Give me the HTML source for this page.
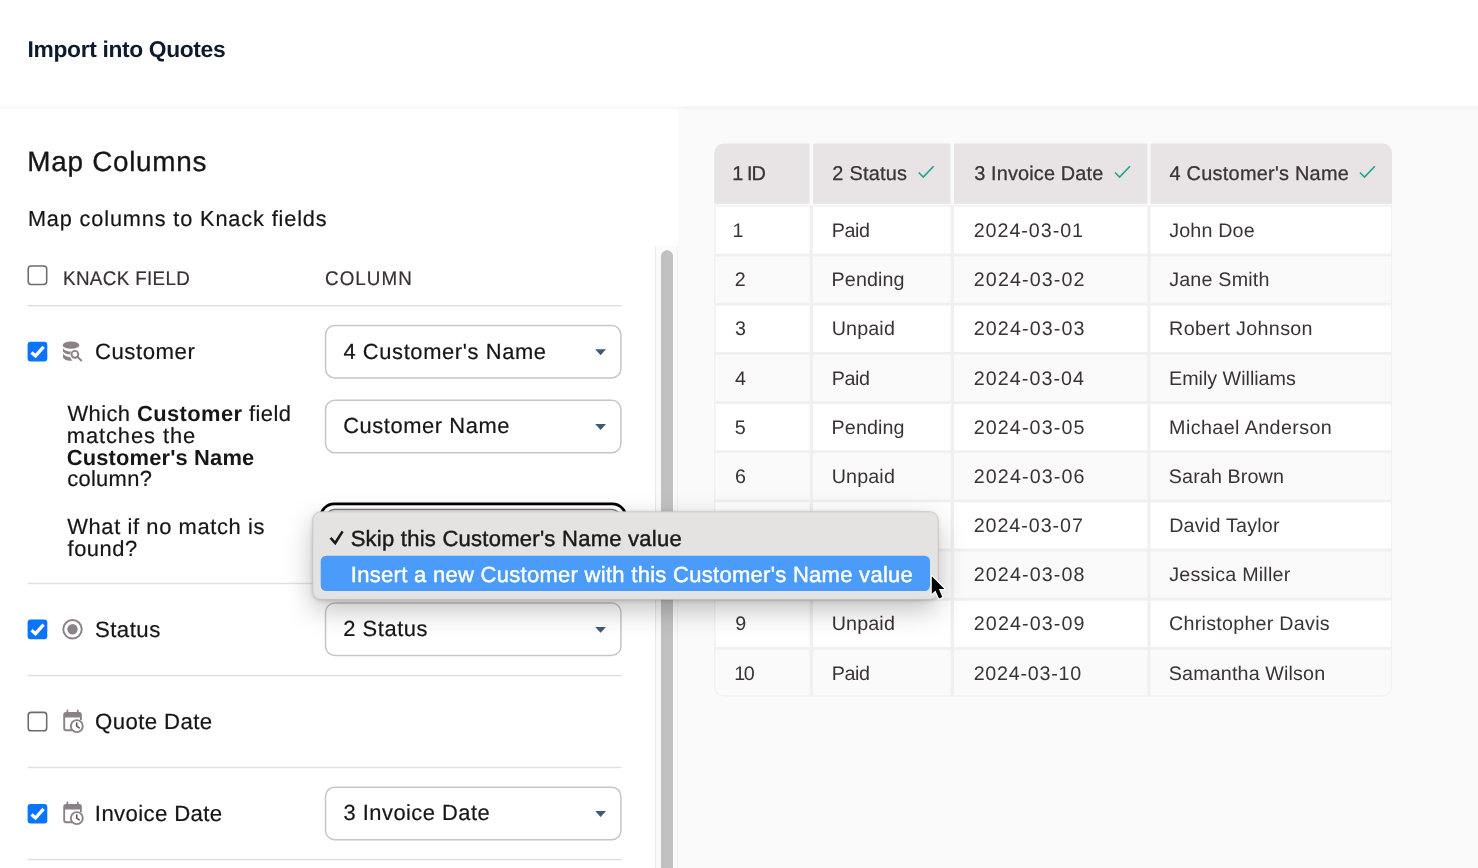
<!DOCTYPE html>
<html lang="en">
<head>
<meta charset="utf-8">
<title>Import into Quotes</title>
<style>
*{box-sizing:border-box;margin:0;padding:0}
html,body{width:1478px;height:868px;overflow:hidden;background:#fff}
body{font-family:"Liberation Sans",sans-serif;color:#1a1a1a}
.page{position:absolute;left:0;top:0;width:1478px;height:868px;overflow:hidden;will-change:transform;background:#fff}
.t{position:absolute;white-space:nowrap;line-height:1;font-weight:400;font-style:normal;text-rendering:geometricPrecision;-webkit-text-stroke:0.2px}
h1.t,b.t,.t b{font-weight:700;-webkit-text-stroke:0}
.g{position:absolute;display:block;overflow:hidden}
.bg{position:absolute}
table,thead,tbody,tr,th,td{display:block}
</style>
</head>
<body>
<div class="page">
<svg class="g bgsvg" style="left:0px;top:0px" width="1478" height="868" viewBox="0 0 1478 868"><rect x="0" y="0" width="1478" height="868" fill="#fff"/><rect x="677.8" y="106" width="800.2" height="762" fill="#fafafa"/><rect x="0" y="106" width="680.8" height="3.3" fill="#fafafa"/><rect x="680.8" y="106" width="797.2" height="3.3" fill="#f5f5f5"/></svg>
<header>
<h1 class="t" style="left:27.58px;top:38.4px;font-size:22.8px;letter-spacing:-0.344px;color:#0e1b2e;font-weight:700;">Import into Quotes</h1>
</header>
<section class="left">
<h2 class="t" style="left:27.37px;top:147.7px;font-size:27.9px;letter-spacing:0.691px;color:#151515;-webkit-text-stroke:0.3px;">Map Columns</h2>
<p class="t" style="left:27.89px;top:208.3px;font-size:21.7px;letter-spacing:0.874px;color:#151515;">Map columns to Knack fields</p>
<div class="row head">
<svg class="g cb" style="left:26px;top:264px" width="23" height="23" viewBox="26 264 23 23"><rect x="28.23" y="265.97" width="18.45" height="18.45" rx="2.83" fill="#fff" stroke="#6c6c6c" stroke-width="1.55"/></svg>
<span class="t" style="left:62.74px;top:270.1px;font-size:19.8px;letter-spacing:0.387px;color:#3a2f33;transform:scaleX(0.95);transform-origin:0 0;">KNACK FIELD</span>
<span class="t" style="left:324.78px;top:270.1px;font-size:19.8px;letter-spacing:1.123px;color:#3a2f33;transform:scaleX(0.95);transform-origin:0 0;">COLUMN</span>
<svg class="g sep" style="left:27px;top:303px" width="595" height="5" viewBox="27 303 595 5"><rect x="27.6" y="305.00" width="593.80" height="1.4" fill="#dcdfe8"/></svg>
</div>
<div class="row">
<svg class="g cb" style="left:26px;top:340px" width="23" height="23" viewBox="26 340 23 23"><rect x="27.60" y="341.80" width="19.70" height="19.70" rx="3" fill="#0975ff"/><path d="M31.50 352.40 L35.50 355.90 L43.60 346.80" fill="none" stroke="#fff" stroke-width="3.3"/></svg>
<svg class="g icon" style="left:61px;top:340px" width="24" height="24" viewBox="61 340 24 24"><g transform="translate(62.70 341.30)"><g fill="#8b8187"><ellipse cx="8.3" cy="3.85" rx="8.25" ry="3.65"/><path d="M0.3 6.9 C1.6 9.2 5 10.3 8.6 10.3 C7.9 11.2 7.4 12.1 7.3 13.1 C4.3 12.9 1.5 11.9 0.3 10.4 Z"/><path d="M0.3 12.4 C1.6 14.4 4.3 15.5 7.4 15.8 C7.8 17.3 8.7 18.5 9.9 19.3 C9.4 19.4 8.9 19.4 8.4 19.4 C3.9 19.4 0.3 17.7 0.3 15.6 Z"/></g><circle cx="12.2" cy="13" r="3.4" fill="none" stroke="#8b8187" stroke-width="1.9"/><path d="M15 15.8 L18.5 19.1" stroke="#8b8187" stroke-width="2" stroke-linecap="round"/></g></svg>
<label class="t" style="left:94.89px;top:340.6px;font-size:22.2px;letter-spacing:0.542px;color:#161616;">Customer</label>
<div class="select"><svg class="g box" style="left:323px;top:323px" width="300" height="57" viewBox="323 323 300 57"><rect x="325.55" y="325.45" width="295.40" height="52.50" rx="9.25" fill="#fff" stroke="#c9c4c6" stroke-width="1.5"/><path d="M595.2 349.30 H606 L600.6 355.20 Z" fill="#3f5b78"/></svg><span class="t" style="left:343.39px;top:340.6px;font-size:21.9px;letter-spacing:0.618px;color:#161616;">4 Customer's Name</span></div>
<span class="t" style="left:67.45px;top:402.75px;font-size:21.9px;letter-spacing:0.428px;color:#161616;">Which <b>Customer</b> field</span>
<span class="t" style="left:66.72px;top:424.5px;font-size:21.9px;letter-spacing:0.928px;color:#161616;">matches the</span>
<b class="t" style="left:66.79px;top:446.5px;font-size:21.9px;letter-spacing:0.155px;color:#161616;">Customer's Name</b>
<span class="t" style="left:67.19px;top:467.75px;font-size:21.9px;letter-spacing:0.314px;color:#161616;">column?</span>
<div class="select"><svg class="g box" style="left:323px;top:398px" width="300" height="57" viewBox="323 398 300 57"><rect x="325.55" y="400.25" width="295.40" height="52.50" rx="9.25" fill="#fff" stroke="#c9c4c6" stroke-width="1.5"/><path d="M595.2 424.10 H606 L600.6 430.00 Z" fill="#3f5b78"/></svg><span class="t" style="left:343.19px;top:415.25px;font-size:21.9px;letter-spacing:0.571px;color:#161616;">Customer Name</span></div>
<span class="t" style="left:67.3px;top:516.25px;font-size:21.9px;letter-spacing:0.606px;color:#161616;">What if no match is</span>
<span class="t" style="left:67.54px;top:538.25px;font-size:21.9px;letter-spacing:0.517px;color:#161616;">found?</span>
<div class="select"><svg class="g box" style="left:317px;top:501px" width="312" height="69" viewBox="317 501 312 69"><rect x="320.60" y="503.90" width="305.30" height="63.60" rx="13.60" fill="#fff" stroke="#000" stroke-width="2.8"/><rect x="325.55" y="509.45" width="295.40" height="52.50" rx="9.25" fill="#fff" stroke="#7f757b" stroke-width="1.5"/><path d="M595.2 533.30 H606 L600.6 539.20 Z" fill="#3f5b78"/></svg></div>
<svg class="g sep" style="left:27px;top:581px" width="595" height="5" viewBox="27 581 595 5"><rect x="27.6" y="582.80" width="593.80" height="1.4" fill="#dcdfe8"/></svg>
</div>
<div class="row">
<svg class="g cb" style="left:26px;top:618px" width="23" height="23" viewBox="26 618 23 23"><rect x="27.60" y="619.60" width="19.70" height="19.70" rx="3" fill="#0975ff"/><path d="M31.50 630.20 L35.50 633.70 L43.60 624.60" fill="none" stroke="#fff" stroke-width="3.3"/></svg>
<svg class="g icon" style="left:60px;top:617px" width="25" height="25" viewBox="60 617 25 25"><circle cx="72.5" cy="629.3" r="9.25" fill="none" stroke="#8b8187" stroke-width="1.95"/><circle cx="72.5" cy="629.3" r="5.2" fill="#8b8187"/></svg>
<label class="t" style="left:94.95px;top:619px;font-size:22.2px;letter-spacing:0.48px;color:#161616;">Status</label>
<div class="select"><svg class="g box" style="left:323px;top:601px" width="300" height="57" viewBox="323 601 300 57"><rect x="325.55" y="603.05" width="295.40" height="52.50" rx="9.25" fill="#fff" stroke="#c9c4c6" stroke-width="1.5"/><path d="M595.2 626.90 H606 L600.6 632.80 Z" fill="#3f5b78"/></svg><span class="t" style="left:343.14px;top:617.8px;font-size:21.9px;letter-spacing:0.58px;color:#161616;">2 Status</span></div>
<svg class="g sep" style="left:27px;top:673px" width="595" height="5" viewBox="27 673 595 5"><rect x="27.6" y="674.90" width="593.80" height="1.4" fill="#dcdfe8"/></svg>
</div>
<div class="row">
<svg class="g cb" style="left:26px;top:710px" width="23" height="23" viewBox="26 710 23 23"><rect x="28.23" y="712.37" width="18.45" height="18.45" rx="2.83" fill="#fff" stroke="#6c6c6c" stroke-width="1.55"/></svg>
<svg class="g icon" style="left:62px;top:709px" width="24" height="27" viewBox="62 709 24 27"><g transform="translate(63.00 710.20)"><path d="M4.4 0.3 V3 M14.8 0.3 V3" stroke="#8b8187" stroke-width="1.8" stroke-linecap="round"/><path d="M9 20.0 H2.9 Q1.2 20.0 1.2 18.3 V4.5 Q1.2 2.8 2.9 2.8 H16.2 Q17.9 2.8 17.9 4.5 V10" fill="none" stroke="#8b8187" stroke-width="1.9"/><rect x="1.2" y="2.8" width="16.7" height="4.5" fill="#8b8187"/><circle cx="13.8" cy="15.9" r="6.0" fill="#fff" stroke="#8b8187" stroke-width="1.9"/><path d="M13.7 12.8 V16.0 L16.2 17.6" fill="none" stroke="#5d5259" stroke-width="1.6" stroke-linecap="round" stroke-linejoin="round"/></g></svg>
<label class="t" style="left:95.09px;top:711px;font-size:22.2px;letter-spacing:0.391px;color:#161616;">Quote Date</label>
<svg class="g sep" style="left:27px;top:765px" width="595" height="5" viewBox="27 765 595 5"><rect x="27.6" y="766.80" width="593.80" height="1.4" fill="#dcdfe8"/></svg>
</div>
<div class="row">
<svg class="g cb" style="left:26px;top:802px" width="23" height="23" viewBox="26 802 23 23"><rect x="27.60" y="803.90" width="19.70" height="19.70" rx="3" fill="#0975ff"/><path d="M31.50 814.50 L35.50 818.00 L43.60 808.90" fill="none" stroke="#fff" stroke-width="3.3"/></svg>
<svg class="g icon" style="left:62px;top:801px" width="24" height="27" viewBox="62 801 24 27"><g transform="translate(63.00 802.20)"><path d="M4.4 0.3 V3 M14.8 0.3 V3" stroke="#8b8187" stroke-width="1.8" stroke-linecap="round"/><path d="M9 20.0 H2.9 Q1.2 20.0 1.2 18.3 V4.5 Q1.2 2.8 2.9 2.8 H16.2 Q17.9 2.8 17.9 4.5 V10" fill="none" stroke="#8b8187" stroke-width="1.9"/><rect x="1.2" y="2.8" width="16.7" height="4.5" fill="#8b8187"/><circle cx="13.8" cy="15.9" r="6.0" fill="#fff" stroke="#8b8187" stroke-width="1.9"/><path d="M13.7 12.8 V16.0 L16.2 17.6" fill="none" stroke="#5d5259" stroke-width="1.6" stroke-linecap="round" stroke-linejoin="round"/></g></svg>
<label class="t" style="left:94.86px;top:802.75px;font-size:22.2px;letter-spacing:0.358px;color:#161616;">Invoice Date</label>
<div class="select"><svg class="g box" style="left:323px;top:785px" width="300" height="57" viewBox="323 785 300 57"><rect x="325.55" y="787.15" width="295.40" height="52.50" rx="9.25" fill="#fff" stroke="#c9c4c6" stroke-width="1.5"/><path d="M595.2 811.00 H606 L600.6 816.90 Z" fill="#3f5b78"/></svg><span class="t" style="left:343.58px;top:802.2px;font-size:21.9px;letter-spacing:0.47px;color:#161616;">3 Invoice Date</span></div>
<svg class="g sep" style="left:27px;top:857px" width="595" height="5" viewBox="27 857 595 5"><rect x="27.6" y="858.90" width="593.80" height="1.4" fill="#dcdfe8"/></svg>
</div>
<svg class="g scrollbar" style="left:654px;top:245px" width="25" height="623" viewBox="654 245 25 623"><rect x="655" y="246" width="22.8" height="630" fill="#fafafa"/><rect x="655" y="246" width="1" height="630" fill="#e8e8e8"/><rect x="676.8" y="246" width="1" height="630" fill="#ededed"/><rect x="661" y="250.3" width="12" height="640" rx="6" fill="#c1c1c1"/></svg>
</section>
<section class="right">
<svg class="g grid" style="left:713px;top:142px" width="681" height="556" viewBox="713 142 681 556"><clipPath id="tc"><rect x="714.1" y="143.35" width="678.10" height="553.45" rx="10"/></clipPath><clipPath id="ti"><rect x="715.40" y="190" width="675.60" height="505.50" rx="8.8"/></clipPath><g clip-path="url(#tc)"><rect x="714" y="143.35" width="679" height="61.85" fill="#fafafa"/><rect x="714" y="205.2" width="679" height="491.60" fill="#f0f0f0"/><rect x="714.1" y="143.35" width="95.50" height="60.45" fill="#e8e4e5"/><rect x="813.1" y="143.35" width="137.50" height="60.45" fill="#e8e4e5"/><rect x="954.0" y="143.35" width="193.40" height="60.45" fill="#e8e4e5"/><rect x="1150.6" y="143.35" width="241.60" height="60.45" fill="#e8e4e5"/></g><g clip-path="url(#ti)"><rect x="714.10" y="206.60" width="95.50" height="47.00" fill="#ffffff"/><rect x="813.10" y="206.60" width="137.50" height="47.00" fill="#ffffff"/><rect x="954.00" y="206.60" width="193.40" height="47.00" fill="#ffffff"/><rect x="1150.60" y="206.60" width="241.60" height="47.00" fill="#ffffff"/><rect x="714.10" y="256.50" width="95.50" height="46.27" fill="#fafafa"/><rect x="813.10" y="256.50" width="137.50" height="46.27" fill="#fafafa"/><rect x="954.00" y="256.50" width="193.40" height="46.27" fill="#fafafa"/><rect x="1150.60" y="256.50" width="241.60" height="46.27" fill="#fafafa"/><rect x="714.10" y="305.67" width="95.50" height="46.27" fill="#ffffff"/><rect x="813.10" y="305.67" width="137.50" height="46.27" fill="#ffffff"/><rect x="954.00" y="305.67" width="193.40" height="46.27" fill="#ffffff"/><rect x="1150.60" y="305.67" width="241.60" height="46.27" fill="#ffffff"/><rect x="714.10" y="354.84" width="95.50" height="46.27" fill="#fafafa"/><rect x="813.10" y="354.84" width="137.50" height="46.27" fill="#fafafa"/><rect x="954.00" y="354.84" width="193.40" height="46.27" fill="#fafafa"/><rect x="1150.60" y="354.84" width="241.60" height="46.27" fill="#fafafa"/><rect x="714.10" y="404.01" width="95.50" height="46.27" fill="#ffffff"/><rect x="813.10" y="404.01" width="137.50" height="46.27" fill="#ffffff"/><rect x="954.00" y="404.01" width="193.40" height="46.27" fill="#ffffff"/><rect x="1150.60" y="404.01" width="241.60" height="46.27" fill="#ffffff"/><rect x="714.10" y="453.18" width="95.50" height="46.27" fill="#fafafa"/><rect x="813.10" y="453.18" width="137.50" height="46.27" fill="#fafafa"/><rect x="954.00" y="453.18" width="193.40" height="46.27" fill="#fafafa"/><rect x="1150.60" y="453.18" width="241.60" height="46.27" fill="#fafafa"/><rect x="714.10" y="502.35" width="95.50" height="46.27" fill="#ffffff"/><rect x="813.10" y="502.35" width="137.50" height="46.27" fill="#ffffff"/><rect x="954.00" y="502.35" width="193.40" height="46.27" fill="#ffffff"/><rect x="1150.60" y="502.35" width="241.60" height="46.27" fill="#ffffff"/><rect x="714.10" y="551.52" width="95.50" height="46.27" fill="#fafafa"/><rect x="813.10" y="551.52" width="137.50" height="46.27" fill="#fafafa"/><rect x="954.00" y="551.52" width="193.40" height="46.27" fill="#fafafa"/><rect x="1150.60" y="551.52" width="241.60" height="46.27" fill="#fafafa"/><rect x="714.10" y="600.69" width="95.50" height="46.27" fill="#ffffff"/><rect x="813.10" y="600.69" width="137.50" height="46.27" fill="#ffffff"/><rect x="954.00" y="600.69" width="193.40" height="46.27" fill="#ffffff"/><rect x="1150.60" y="600.69" width="241.60" height="46.27" fill="#ffffff"/><rect x="714.10" y="649.86" width="95.50" height="45.64" fill="#fafafa"/><rect x="813.10" y="649.86" width="137.50" height="45.64" fill="#fafafa"/><rect x="954.00" y="649.86" width="193.40" height="45.64" fill="#fafafa"/><rect x="1150.60" y="649.86" width="241.60" height="45.64" fill="#fafafa"/></g></svg>
<svg class="g tick" style="left:916px;top:164px" width="20" height="16" viewBox="916 164 20 16"><path d="M918.70 172.50 L923.30 177.10 L933.60 166.20" fill="none" stroke="#19a68d" stroke-width="1.6"/></svg>
<svg class="g tick" style="left:1112px;top:164px" width="20" height="16" viewBox="1112 164 20 16"><path d="M1115.00 172.50 L1119.60 177.10 L1129.90 166.20" fill="none" stroke="#19a68d" stroke-width="1.6"/></svg>
<svg class="g tick" style="left:1357px;top:164px" width="20" height="16" viewBox="1357 164 20 16"><path d="M1359.90 172.50 L1364.50 177.10 L1374.80 166.20" fill="none" stroke="#19a68d" stroke-width="1.6"/></svg>
<table>
<thead><tr>
<th class="t" style="left:732.33px;top:165px;font-size:19.9px;letter-spacing:-0.961px;color:#3c3337;-webkit-text-stroke:0.28px;">1 ID</th>
<th class="t" style="left:832.34px;top:165px;font-size:19.9px;letter-spacing:0.247px;color:#3c3337;-webkit-text-stroke:0.28px;">2 Status</th>
<th class="t" style="left:974.22px;top:165px;font-size:19.9px;letter-spacing:0.148px;color:#3c3337;-webkit-text-stroke:0.28px;">3 Invoice Date</th>
<th class="t" style="left:1169.5px;top:165px;font-size:19.9px;letter-spacing:0.261px;color:#3c3337;-webkit-text-stroke:0.28px;">4 Customer's Name</th>
</tr></thead>
<tbody>
<tr>
<td class="t" style="left:732.38px;top:222.06px;font-size:19.7px;letter-spacing:0.0px;color:#3a3236;-webkit-text-stroke:0px;">1</td>
<td class="t" style="left:831.64px;top:222.06px;font-size:19.7px;letter-spacing:-0.33px;color:#3a3236;-webkit-text-stroke:0px;">Paid</td>
<td class="t" style="left:973.73px;top:222.06px;font-size:19.7px;letter-spacing:0.954px;color:#3a3236;-webkit-text-stroke:0px;">2024-03-01</td>
<td class="t" style="left:1169.21px;top:222.06px;font-size:19.7px;letter-spacing:0.16px;color:#3a3236;-webkit-text-stroke:0px;">John Doe</td>
</tr>
<tr>
<td class="t" style="left:734.65px;top:271.23px;font-size:19.7px;letter-spacing:0.0px;color:#3a3236;-webkit-text-stroke:0px;">2</td>
<td class="t" style="left:831.61px;top:271.23px;font-size:19.7px;letter-spacing:0.118px;color:#3a3236;-webkit-text-stroke:0px;">Pending</td>
<td class="t" style="left:973.76px;top:271.23px;font-size:19.7px;letter-spacing:1.124px;color:#3a3236;-webkit-text-stroke:0px;">2024-03-02</td>
<td class="t" style="left:1169.13px;top:271.23px;font-size:19.7px;letter-spacing:0.21px;color:#3a3236;-webkit-text-stroke:0px;">Jane Smith</td>
</tr>
<tr>
<td class="t" style="left:734.92px;top:320.4px;font-size:19.7px;letter-spacing:0.0px;color:#3a3236;-webkit-text-stroke:0px;">3</td>
<td class="t" style="left:831.72px;top:320.4px;font-size:19.7px;letter-spacing:0.144px;color:#3a3236;-webkit-text-stroke:0px;">Unpaid</td>
<td class="t" style="left:973.73px;top:320.4px;font-size:19.7px;letter-spacing:1.117px;color:#3a3236;-webkit-text-stroke:0px;">2024-03-03</td>
<td class="t" style="left:1169.11px;top:320.4px;font-size:19.7px;letter-spacing:0.343px;color:#3a3236;-webkit-text-stroke:0px;">Robert Johnson</td>
</tr>
<tr>
<td class="t" style="left:734.96px;top:369.57px;font-size:19.7px;letter-spacing:0.0px;color:#3a3236;-webkit-text-stroke:0px;">4</td>
<td class="t" style="left:831.64px;top:369.57px;font-size:19.7px;letter-spacing:-0.33px;color:#3a3236;-webkit-text-stroke:0px;">Paid</td>
<td class="t" style="left:973.67px;top:369.57px;font-size:19.7px;letter-spacing:1.075px;color:#3a3236;-webkit-text-stroke:0px;">2024-03-04</td>
<td class="t" style="left:1169.07px;top:369.57px;font-size:19.7px;letter-spacing:-0.01px;color:#3a3236;-webkit-text-stroke:0px;">Emily Williams</td>
</tr>
<tr>
<td class="t" style="left:734.87px;top:418.74px;font-size:19.7px;letter-spacing:0.0px;color:#3a3236;-webkit-text-stroke:0px;">5</td>
<td class="t" style="left:831.61px;top:418.74px;font-size:19.7px;letter-spacing:0.118px;color:#3a3236;-webkit-text-stroke:0px;">Pending</td>
<td class="t" style="left:973.7px;top:418.74px;font-size:19.7px;letter-spacing:1.11px;color:#3a3236;-webkit-text-stroke:0px;">2024-03-05</td>
<td class="t" style="left:1169.11px;top:418.74px;font-size:19.7px;letter-spacing:0.413px;color:#3a3236;-webkit-text-stroke:0px;">Michael Anderson</td>
</tr>
<tr>
<td class="t" style="left:735.11px;top:467.91px;font-size:19.7px;letter-spacing:0.0px;color:#3a3236;-webkit-text-stroke:0px;">6</td>
<td class="t" style="left:831.72px;top:467.91px;font-size:19.7px;letter-spacing:0.144px;color:#3a3236;-webkit-text-stroke:0px;">Unpaid</td>
<td class="t" style="left:973.72px;top:467.91px;font-size:19.7px;letter-spacing:1.115px;color:#3a3236;-webkit-text-stroke:0px;">2024-03-06</td>
<td class="t" style="left:1168.85px;top:467.91px;font-size:19.7px;letter-spacing:0.122px;color:#3a3236;-webkit-text-stroke:0px;">Sarah Brown</td>
</tr>
<tr>
<td class="t" style="left:734.66px;top:517.08px;font-size:19.7px;letter-spacing:0.0px;color:#3a3236;-webkit-text-stroke:0px;">7</td>
<td class="t" style="left:831.61px;top:517.08px;font-size:19.7px;letter-spacing:0.118px;color:#3a3236;-webkit-text-stroke:0px;">Pending</td>
<td class="t" style="left:973.64px;top:517.08px;font-size:19.7px;letter-spacing:0.96px;color:#3a3236;-webkit-text-stroke:0px;">2024-03-07</td>
<td class="t" style="left:1169.2px;top:517.08px;font-size:19.7px;letter-spacing:0.218px;color:#3a3236;-webkit-text-stroke:0px;">David Taylor</td>
</tr>
<tr>
<td class="t" style="left:735.17px;top:566.25px;font-size:19.7px;letter-spacing:0.0px;color:#3a3236;-webkit-text-stroke:0px;">8</td>
<td class="t" style="left:831.64px;top:566.25px;font-size:19.7px;letter-spacing:-0.33px;color:#3a3236;-webkit-text-stroke:0px;">Paid</td>
<td class="t" style="left:973.72px;top:566.25px;font-size:19.7px;letter-spacing:1.115px;color:#3a3236;-webkit-text-stroke:0px;">2024-03-08</td>
<td class="t" style="left:1169.23px;top:566.25px;font-size:19.7px;letter-spacing:0.225px;color:#3a3236;-webkit-text-stroke:0px;">Jessica Miller</td>
</tr>
<tr>
<td class="t" style="left:735.15px;top:615.42px;font-size:19.7px;letter-spacing:0.0px;color:#3a3236;-webkit-text-stroke:0px;">9</td>
<td class="t" style="left:831.72px;top:615.42px;font-size:19.7px;letter-spacing:0.144px;color:#3a3236;-webkit-text-stroke:0px;">Unpaid</td>
<td class="t" style="left:973.75px;top:615.42px;font-size:19.7px;letter-spacing:1.123px;color:#3a3236;-webkit-text-stroke:0px;">2024-03-09</td>
<td class="t" style="left:1169.01px;top:615.42px;font-size:19.7px;letter-spacing:0.259px;color:#3a3236;-webkit-text-stroke:0px;">Christopher Davis</td>
</tr>
<tr>
<td class="t" style="left:734.3px;top:664.59px;font-size:19.7px;letter-spacing:-1.389px;color:#3a3236;-webkit-text-stroke:0px;">10</td>
<td class="t" style="left:831.64px;top:664.59px;font-size:19.7px;letter-spacing:-0.33px;color:#3a3236;-webkit-text-stroke:0px;">Paid</td>
<td class="t" style="left:973.66px;top:664.59px;font-size:19.7px;letter-spacing:0.769px;color:#3a3236;-webkit-text-stroke:0px;">2024-03-10</td>
<td class="t" style="left:1168.85px;top:664.59px;font-size:19.7px;letter-spacing:0.141px;color:#3a3236;-webkit-text-stroke:0px;">Samantha Wilson</td>
</tr>
</tbody>
</table>
</section>
<div class="popup">
<div class="bg" style="left:313.4px;top:512.4px;width:624.1px;height:86.3px;border-radius:8px;box-shadow:0 10px 28px rgba(0,0,0,.26),0 1px 4px rgba(0,0,0,.22)"></div>
<svg class="g menu" style="left:311px;top:510px" width="629" height="91" viewBox="311 510 629 91"><rect x="312.80" y="511.80" width="625.30" height="87.50" rx="8.10" fill="#e5e3e2" stroke="#c6c4c3" stroke-width="0.8"/><rect x="320.70" y="555.70" width="609.30" height="35.30" rx="5.5" fill="#4b9bfb"/><path d="M330.6 537.9 L335.2 543.0 L342.6 531.4" fill="none" stroke="#1a1a1a" stroke-width="2.6"/></svg>
<div class="t" style="left:350.65px;top:528px;font-size:22px;letter-spacing:0.258px;color:#1a1a1a;-webkit-text-stroke:0.45px;">Skip this Customer's Name value</div>
<div class="t" style="left:350.86px;top:563.7px;font-size:22px;letter-spacing:0.287px;color:#ffffff;-webkit-text-stroke:0.45px;">Insert a new Customer with this Customer's Name value</div>
</div>
<svg class="g cursor" style="left:928px;top:571px" width="22" height="32" viewBox="928 571 22 32"><path d="M931.8 576.3 L931.8 593.9 L935.4 590.6 L939.0 598.4 L942.3 597.1 L938.9 589.0 L944.4 588.9 Z" fill="#000" stroke="#fff" stroke-width="2.5" stroke-linejoin="round" paint-order="stroke"/></svg>
</div>
</body>
</html>
